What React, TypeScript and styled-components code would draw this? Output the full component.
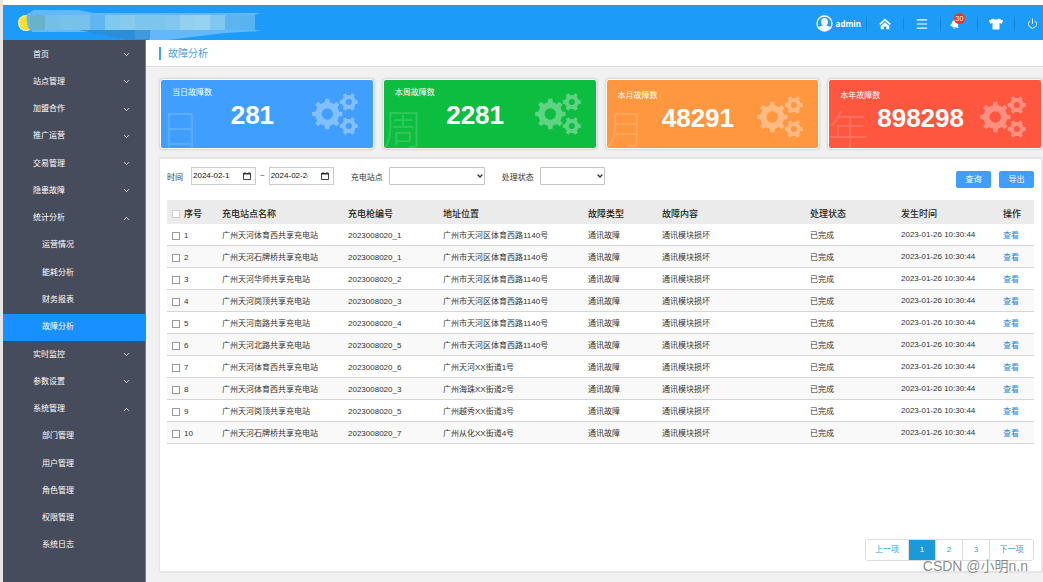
import React, { useState } from "react";
import styled, { createGlobalStyle, css } from "styled-components";
import { FaTshirt, FaBell } from "react-icons/fa";
import { ChevronDown, ChevronUp, Menu, Power } from "lucide-react";

const GlobalStyle = createGlobalStyle`
  *, *::before, *::after { box-sizing: border-box; }
  body {
    margin: 0;
    background: #f1f1f1;
    color: #333;
    font: 8px/12px "Liberation Sans", "Noto Sans CJK SC", sans-serif;
  }
  button, input, select { font: inherit; color: inherit; }
  h1, ul { margin: 0; padding: 0; }
  ul { list-style: none; }
  a { text-decoration: none; color: inherit; }
`;

const Page = styled.div`
  min-height: 100vh;
  display: flex;
  flex-direction: column;
  border-left: 3px solid #e6e6e6;
  position: relative;
`;

const Header = styled.header`
  display: flex;
  justify-content: space-between;
  align-items: center;
  height: 40px;
  border-top: 5px solid #fff;
  background: #1c9bf8;
  color: #fff;
`;

const Tools = styled.nav`
  display: flex;
  align-items: center;
  height: 100%;
  padding-top: 2px;
`;

const User = styled.a`
  display: flex;
  align-items: center;
  gap: 3px;
  padding-right: 5px;
  font: bold 8px/12px "Open Sans", sans-serif;
`;

const Tool = styled.button<{ $last?: boolean }>`
  position: relative;
  display: flex;
  align-items: center;
  justify-content: center;
  width: ${(p) => (p.$last ? 29 : 37)}px;
  height: 14px;
  padding: 0 0 0 ${(p) => (p.$last ? 6 : 0)}px;
  border: 0;
  border-left: 1px solid #1a86d6;
  background: none;
  color: #fff;
`;

const Bell = styled(FaBell)`
  margin: 1px 8px 0 0;
  transform: rotate(15deg);
`;

const BadgeDot = styled.span`
  position: absolute;
  top: -4px;
  left: 13px;
  width: 11px;
  height: 11px;
  border-radius: 50%;
  background: #f5341d;
  font-size: 7px;
  line-height: 11px;
  text-align: center;
`;

const Body = styled.div`
  flex: 1;
  display: flex;
`;

const Sidebar = styled.nav`
  width: 143px;
  flex: none;
  background: #474c5c;
  color: #fff;
  padding: 1px 0 23px;
  display: flex;
  border-right: 1px solid #777b87;
`;

const MenuList = styled.ul`
  flex: 1;
  display: flex;
  flex-direction: column;
`;

const MenuItem = styled.li`
  flex: 1;
  min-height: 27px;
  display: flex;
`;

const MenuLink = styled.a<{ $sub?: boolean; $active?: boolean }>`
  flex: 1;
  display: flex;
  align-items: center;
  justify-content: space-between;
  padding: 0 14px 0 ${(p) => (p.$sub ? 39 : 30)}px;
  background: ${(p) => (p.$active ? "#1890ff" : "transparent")};
`;

const Main = styled.main`
  flex: 1;
  min-width: 0;
  display: flex;
  flex-direction: column;
`;

const TitleBar = styled.div`
  height: 27px;
  padding-left: 13px;
  display: flex;
  align-items: center;
  background: #fff;
  border-bottom: 1px solid #dfdfdf;
`;

const Title = styled.h1`
  padding-left: 7px;
  border-left: 2px solid #409eff;
  color: #4b9fe0;
  font-size: 10px;
  font-weight: normal;
  line-height: 13px;
`;

const Content = styled.div`
  flex: 1;
  display: flex;
  flex-direction: column;
  gap: 9px;
  padding: 12px 1px 10px 14px;
`;

const Cards = styled.section`
  display: grid;
  grid-template-columns: repeat(4, 1fr);
  gap: 9px;
`;

const Card = styled.article<{ $color: string; $low?: boolean }>`
  position: relative;
  overflow: hidden;
  display: grid;
  grid-template-columns: 1fr 61px;
  height: 70px;
  padding-top: ${(p) => (p.$low ? 10 : 7)}px;
  border: 1px solid #fff;
  border-radius: 3px;
  background: ${(p) => p.$color};
  box-shadow: 0 0 2px 1px #d4d6d6;
  color: #fff;
`;

const CardLabel = styled.div`
  padding-left: 11px;
`;

const CardValue = styled.div`
  padding-left: 32px;
  font-size: 26px;
  font-weight: bold;
  line-height: 32px;
  text-align: center;
`;

const CardMark = styled.span`
  position: absolute;
  left: -1px;
  bottom: -2px;
  color: rgba(255, 255, 255, 0.16);
  font-size: 40px;
  font-weight: 300;
  line-height: 40px;
`;

const GearBox = styled.div`
  padding-top: 6px;
`;

const Panel = styled.section`
  flex: 1;
  display: flex;
  flex-direction: column;
  padding: 8px 7px 10px;
  background: #fff;
  border: 1px solid #e4e4e4;
  border-left: 0;
  box-shadow: 0 0 2px #ccc;
`;

const Filters = styled.form`
  display: flex;
  align-items: flex-start;
  height: 33px;
`;

const Field = styled.div<{ $gap?: number }>`
  display: flex;
  align-items: center;
  gap: ${(p) => p.$gap ?? 6}px;
  margin-right: 17px;
`;

const FieldLabel = styled.label`
  padding-top: 3px;
`;

const DateRange = styled.span`
  display: flex;
  align-items: center;
  gap: 4px;
`;

const DateBox = styled.span`
  display: flex;
  align-items: center;
  width: 65px;
  height: 18px;
  padding: 0 4px 0 1px;
  border: 1px solid #ccc;
`;

const DateInput = styled.input`
  flex: 1;
  min-width: 0;
  margin-right: 13px;
  padding: 0;
  border: 0;
  background: none;
  color: #111;
  outline: none;
`;

const SelectBox = styled.span<{ $wide?: boolean }>`
  position: relative;
  display: flex;
  width: ${(p) => (p.$wide ? 96 : 65)}px;
  height: 18px;

  svg {
    position: absolute;
    top: 5px;
    right: 1px;
    pointer-events: none;
  }
`;

const Select = styled.select`
  appearance: none;
  flex: 1;
  padding: 0 12px 0 4px;
  border: 1px solid #c4c4c4;
  border-radius: 1px;
  background: #fff;
`;

const Actions = styled.div`
  display: flex;
  gap: 8px;
  margin-left: auto;
  padding-top: 4px;
`;

const Button = styled.button`
  width: 35px;
  height: 17px;
  padding: 0;
  border: 0;
  border-radius: 2px;
  background: #409eff;
  color: #fff;
`;

const Table = styled.table`
  width: 100%;
  table-layout: fixed;
  border-collapse: separate;
  border-spacing: 0;
`;

const HeadCell = styled.th`
  height: 24px;
  padding: 3px 0 0;
  background: #ebebeb;
  color: #222;
  font-size: 9px;
  font-weight: 500;
  text-align: left;
  white-space: nowrap;
`;

const Row = styled.tr`
  &:nth-child(even) { background: #f9f9f9; }
`;

const Cell = styled.td<{ $raised?: boolean }>`
  height: 22px;
  padding: ${(p) => (p.$raised ? 0 : 3)}px 0 0;
  border-bottom: 1px solid #d6d6d6;
  white-space: nowrap;
`;

const Check = styled.label`
  display: flex;
  align-items: center;
  gap: 4px;
  padding-left: 5px;
`;

const CheckInput = styled.input<{ $head?: boolean }>`
  appearance: none;
  width: 8px;
  height: 8px;
  margin: 0;
  border: 1px solid ${(p) => (p.$head ? "#d0d0d0" : "#9a9a9a")};
  background: #fff;
  &:checked { background: #409eff; }
`;

const ViewLink = styled.a`
  color: #2188dd;
`;

const Pager = styled.nav`
  display: flex;
  align-self: flex-end;
  margin-top: auto;
  border: 1px solid #ddd;
  border-radius: 3px;
  overflow: hidden;
`;

const PageButton = styled.button<{ $wide?: boolean; $active?: boolean }>`
  width: ${(p) => (p.$wide ? 43 : 27)}px;
  height: 20px;
  padding: 0;
  border: 0;
  border-right: 1px solid #ddd;
  background: #fff;
  color: #2a9fd6;
  &:last-child { border-right: 0; }
  ${(p) =>
    p.$active &&
    css`
      background: #1a9ad6;
      color: #fff;
    `}
`;

const Signature = styled.span`
  position: absolute;
  right: 15px;
  bottom: 6px;
  color: rgba(110, 110, 110, 0.8);
  font-size: 14px;
  line-height: 20px;
`;

function Brand() {
  const blocks = ["#69b3c8", "#74bfea", "#77c1eb", "#77c1eb", "#5fb6f0", "#80c8ee", "#86cbee", "#7cc5ed", "#7cc5ed", "#81c7ee", "#93d0ee", "#97d2ef", "#82c8ee", "#5bb5ef", "#58b3f0"];
  return (
    <svg width="262" height="35" viewBox="0 0 262 35" aria-hidden="true">
      <circle cx="23" cy="18" r="8" fill="#fff6c0" />
      <circle cx="23" cy="18" r="7" fill="#f9e02a" />
      <path d="M24 9 L31 5 H76 L90 8 H257 L252 10 V25 L259 26 L222 28 L165 35 H146 L132 27 H30 Q22 24 24 9Z" fill="#62b8fb" />
      <path d="M76 25 H146 V35 H124 L96 29Z" fill="#2c8ed8" />
      <path d="M132 25 H147 V34 H132Z" fill="#4299df" />
      {blocks.map((fill, i) => (
        <rect key={i} x={27 + i * 15} y="10" width="15" height="15" fill={fill} />
      ))}
    </svg>
  );
}

function Avatar() {
  return (
    <svg width="17" height="17" viewBox="0 0 17 17" aria-hidden="true">
      <circle cx="8.5" cy="8.5" r="7.5" fill="none" stroke="#fff" strokeWidth="1.3" />
      <ellipse cx="8.5" cy="7" rx="3.4" ry="3.9" fill="#fff" />
      <path d="M2.5 13 Q4 11 7 10.300 H10 Q13 11 14.500 13 Q12 16 8.500 16 Q5 16 2.500 13Z" fill="#fff" />
    </svg>
  );
}

function HomeIcon() {
  return (
    <svg width="12" height="12" viewBox="0 0 12 12" aria-hidden="true">
      <path d="M.8 6.300 L6 1.600 L11.200 6.300" fill="none" stroke="#fff" strokeWidth="1.700" />
      <path d="M6 4.300 L10.300 8 V11.300 H7.300 V8.600 H4.700 V11.300 H1.700 V8Z" fill="#fff" />
    </svg>
  );
}

function gear(cx: number, cy: number, root: number, tip: number, hole: number, teeth: number) {
  const step = (Math.PI * 2) / teeth;
  const at = (r: number, a: number) => `${(cx + r * Math.cos(a)).toFixed(2)} ${(cy + r * Math.sin(a)).toFixed(2)}`;
  let d = "";
  for (let i = 0; i < teeth; i++) {
    const a = i * step;
    d += `${i ? "L" : "M"}${at(root, a - step * 0.27)}L${at(tip, a - step * 0.17)}L${at(tip, a + step * 0.17)}L${at(root, a + step * 0.27)}`;
    d += `A${root} ${root} 0 0 1 ${at(root, a + step * 0.73)}`;
  }
  return `${d}ZM${cx + hole} ${cy}A${hole} ${hole} 0 1 0 ${cx - hole} ${cy}A${hole} ${hole} 0 1 0 ${cx + hole} ${cy}Z`;
}

function Gears() {
  return (
    <svg width="46" height="42" viewBox="0 0 46 42" fill="#fff" fillOpacity="0.34" fillRule="evenodd" aria-hidden="true">
      <path d={gear(15.3, 21, 12, 15.3, 5.7, 8)} />
      <path d={gear(36.8, 9, 7, 9.2, 3, 6)} />
      <path d={gear(36.8, 33, 7, 9.2, 3, 6)} />
    </svg>
  );
}

function CalendarIcon() {
  return (
    <svg width="8" height="8" viewBox="0 0 8 8" aria-hidden="true">
      <path d="M.5 1.500 H7.500 V7.500 H.5Z" fill="none" stroke="#444" />
      <path d="M0 1 H8 V2.500 H0Z M1.500 0 H2.500 V1 H1.500Z M5.500 0 H6.500 V1 H5.500Z" fill="#333" />
    </svg>
  );
}

type Entry = { text: string; sub?: boolean; open?: boolean; active?: boolean };
const menu: Entry[] = [
  { text: "首页" },
  { text: "站点管理" },
  { text: "加盟合作" },
  { text: "推广运营" },
  { text: "交易管理" },
  { text: "隐患故障" },
  { text: "统计分析", open: true },
  { text: "运营情况", sub: true },
  { text: "能耗分析", sub: true },
  { text: "财务报表", sub: true },
  { text: "故障分析", sub: true, active: true },
  { text: "实时监控" },
  { text: "参数设置" },
  { text: "系统管理", open: true },
  { text: "部门管理", sub: true },
  { text: "用户管理", sub: true },
  { text: "角色管理", sub: true },
  { text: "权限管理", sub: true },
  { text: "系统日志", sub: true },
];

const cards = [
  { label: "当日故障数", value: "281", mark: "日", color: "#409eff" },
  { label: "本周故障数", value: "2281", mark: "周", color: "#0cbd40" },
  { label: "本月故障数", value: "48291", mark: "月", color: "#ff9640", low: true },
  { label: "本年故障数", value: "898298", mark: "年", color: "#ff5640", low: true },
];

const columns = [
  { text: "充电站点名称", width: 126 },
  { text: "充电枪编号", width: 95 },
  { text: "地址位置", width: 145 },
  { text: "故障类型", width: 74 },
  { text: "故障内容", width: 148 },
  { text: "处理状态", width: 91 },
  { text: "发生时间", width: 102 },
  { text: "操作", width: 31 },
];

const rows = [
  ["广州天河体育西共享充电站", "2023008020_1", "广州市天河区体育西路1140号"],
  ["广州天河石牌桥共享充电站", "2023008020_1", "广州市天河区体育西路1140号"],
  ["广州天河华师共享充电站", "2023008020_2", "广州市天河区体育西路1140号"],
  ["广州天河岗顶共享充电站", "2023008020_3", "广州市天河区体育西路1140号"],
  ["广州天河南路共享充电站", "2023008020_4", "广州市天河区体育西路1140号"],
  ["广州天河北路共享充电站", "2023008020_5", "广州市天河区体育西路1140号"],
  ["广州天河体育西共享充电站", "2023008020_6", "广州天河XX街道1号"],
  ["广州天河体育西共享充电站", "2023008020_3", "广州海珠XX街道2号"],
  ["广州天河岗顶共享充电站", "2023008020_5", "广州越秀XX街道3号"],
  ["广州天河石牌桥共享充电站", "2023008020_7", "广州从化XX街道4号"],
];

export default function App() {
  const [from, setFrom] = useState("2024-02-15");
  const [to, setTo] = useState("2024-02-24");
  return (
    <>
      <GlobalStyle />
      <Page>
        <Header>
          <Brand />
          <Tools>
            <User href="#user"><Avatar />admin</User>
            <Tool aria-label="主页"><HomeIcon /></Tool>
            <Tool aria-label="菜单"><Menu size={14} strokeWidth={2} /></Tool>
            <Tool aria-label="消息">
              <Bell size={10} />
              <BadgeDot>30</BadgeDot>
            </Tool>
            <Tool aria-label="换肤"><FaTshirt size={14} /></Tool>
            <Tool aria-label="退出" $last><Power size={11} strokeWidth={2} /></Tool>
          </Tools>
        </Header>
        <Body>
          <Sidebar>
            <MenuList>
              {menu.map((m) => (
                <MenuItem key={m.text}>
                  <MenuLink href="#menu" $sub={m.sub} $active={m.active}>
                    {m.text}
                    {!m.sub && (m.open ? <ChevronUp size={9} /> : <ChevronDown size={9} />)}
                  </MenuLink>
                </MenuItem>
              ))}
            </MenuList>
          </Sidebar>
          <Main>
            <TitleBar><Title>故障分析</Title></TitleBar>
            <Content>
              <Cards>
                {cards.map((c) => (
                  <Card key={c.mark} $color={c.color} $low={c.low}>
                    <CardMark>{c.mark}</CardMark>
                    <div>
                      <CardLabel>{c.label}</CardLabel>
                      <CardValue>{c.value}</CardValue>
                    </div>
                    <GearBox><Gears /></GearBox>
                  </Card>
                ))}
              </Cards>
              <Panel>
                <Filters>
                  <Field $gap={8}>
                    <FieldLabel htmlFor="from">时间</FieldLabel>
                    <DateRange>
                      <DateBox>
                        <DateInput id="from" value={from} onChange={(e) => setFrom(e.target.value)} />
                        <CalendarIcon />
                      </DateBox>
                      <span>~</span>
                      <DateBox>
                        <DateInput aria-label="结束时间" value={to} onChange={(e) => setTo(e.target.value)} />
                        <CalendarIcon />
                      </DateBox>
                    </DateRange>
                  </Field>
                  <Field>
                    <FieldLabel htmlFor="station">充电站点</FieldLabel>
                    <SelectBox $wide>
                      <Select id="station" />
                      <ChevronDown size={8} strokeWidth={4} />
                    </SelectBox>
                  </Field>
                  <Field>
                    <FieldLabel htmlFor="status">处理状态</FieldLabel>
                    <SelectBox>
                      <Select id="status" />
                      <ChevronDown size={8} strokeWidth={4} />
                    </SelectBox>
                  </Field>
                  <Actions>
                    <Button type="button">查询</Button>
                    <Button type="button">导出</Button>
                  </Actions>
                </Filters>
                <Table>
                  <colgroup>
                    <col width={55} />
                    {columns.map((c) => <col key={c.text} width={c.width} />)}
                  </colgroup>
                  <thead>
                    <tr>
                      <HeadCell>
                        <Check><CheckInput type="checkbox" $head />序号</Check>
                      </HeadCell>
                      {columns.map((c) => <HeadCell key={c.text}>{c.text}</HeadCell>)}
                    </tr>
                  </thead>
                  <tbody>
                    {rows.map(([name, gun, address], i) => (
                      <Row key={i}>
                        <Cell><Check><CheckInput type="checkbox" />{i + 1}</Check></Cell>
                        <Cell>{name}</Cell>
                        <Cell>{gun}</Cell>
                        <Cell>{address}</Cell>
                        <Cell>通讯故障</Cell>
                        <Cell>通讯模块损坏</Cell>
                        <Cell>已完成</Cell>
                        <Cell $raised>2023-01-26 10:30:44</Cell>
                        <Cell><ViewLink href="#view">查看</ViewLink></Cell>
                      </Row>
                    ))}
                  </tbody>
                </Table>
                <Pager aria-label="分页">
                  <PageButton $wide>上一项</PageButton>
                  <PageButton $active>1</PageButton>
                  <PageButton>2</PageButton>
                  <PageButton>3</PageButton>
                  <PageButton $wide>下一项</PageButton>
                </Pager>
              </Panel>
            </Content>
          </Main>
        </Body>
        <Signature>CSDN @小明n.n</Signature>
      </Page>
    </>
  );
}
